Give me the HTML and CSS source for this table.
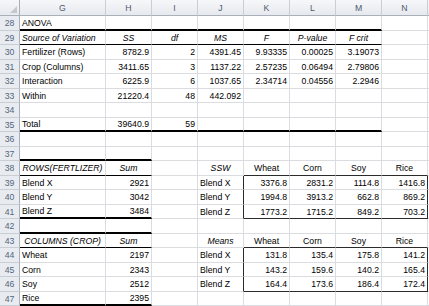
FILE: index.html
```html
<!DOCTYPE html>
<html>
<head>
<meta charset="utf-8">
<link rel="stylesheet" href="styles.css">
</head>
<body>
<div class="sheet">
  <div class="row head">
    <span class="corner"><i class="tri"></i></span><span>G</span><span>H</span><span>I</span><span>J</span><span>K</span><span>L</span><span>M</span><span>N</span><span></span>
  </div>
  <div class="row">
    <span class="rh">28</span><span class="l t2">ANOVA</span><span class="t2"></span><span class="t2"></span><span class="t2"></span><span class="t2"></span><span class="t2"></span><span class="t2"></span><span></span><span></span>
  </div>
  <div class="row">
    <span class="rh">29</span><span class="i l t1">Source of Variation</span><span class="i c t1">SS</span><span class="i c t1">df</span><span class="i c t1">MS</span><span class="i c t1">F</span><span class="i c t1">P-value</span><span class="i c t1">F crit</span><span></span><span></span>
  </div>
  <div class="row">
    <span class="rh">30</span><span class="l">Fertilizer (Rows)</span><span>8782.9</span><span>2</span><span>4391.45</span><span>9.93335</span><span>0.00025</span><span>3.19073</span><span></span><span></span>
  </div>
  <div class="row">
    <span class="rh">31</span><span class="l">Crop (Columns)</span><span>3411.65</span><span>3</span><span>1137.22</span><span>2.57235</span><span>0.06494</span><span>2.79806</span><span></span><span></span>
  </div>
  <div class="row">
    <span class="rh">32</span><span class="l">Interaction</span><span>6225.9</span><span>6</span><span>1037.65</span><span>2.34714</span><span>0.04556</span><span>2.2946</span><span></span><span></span>
  </div>
  <div class="row">
    <span class="rh">33</span><span class="l">Within</span><span>21220.4</span><span>48</span><span>442.092</span><span></span><span></span><span></span><span></span><span></span>
  </div>
  <div class="row">
    <span class="rh">34</span><span></span><span></span><span></span><span></span><span></span><span></span><span></span><span></span><span></span>
  </div>
  <div class="row">
    <span class="rh">35</span><span class="l t2">Total</span><span class="t2">39640.9</span><span class="t2">59</span><span class="t2"></span><span class="t2"></span><span class="t2"></span><span class="t2"></span><span></span><span></span>
  </div>
  <div class="row">
    <span class="rh">36</span><span></span><span></span><span></span><span></span><span></span><span></span><span></span><span></span><span></span>
  </div>
  <div class="row">
    <span class="rh">37</span><span class="t2"></span><span class="t2"></span><span></span><span></span><span></span><span></span><span></span><span></span><span></span>
  </div>
  <div class="row">
    <span class="rh">38</span><span class="i c t1">ROWS(FERTLIZER)</span><span class="i c t1">Sum</span><span></span><span class="i c">SSW</span><span class="c bx">Wheat</span><span class="c bx">Corn</span><span class="c bx">Soy</span><span class="c bx">Rice</span><span></span>
  </div>
  <div class="row">
    <span class="rh">39</span><span class="l">Blend X</span><span>2921</span><span></span><span class="l br">Blend X</span><span>3376.8</span><span>2831.2</span><span>1114.8</span><span class="br">1416.8</span><span></span>
  </div>
  <div class="row">
    <span class="rh">40</span><span class="l">Blend Y</span><span>3042</span><span></span><span class="l br">Blend Y</span><span>1994.8</span><span>3913.2</span><span>662.8</span><span class="br">869.2</span><span></span>
  </div>
  <div class="row">
    <span class="rh">41</span><span class="l t2">Blend Z</span><span class="t2">3484</span><span></span><span class="l br">Blend Z</span><span class="bx">1773.2</span><span class="bx">1715.2</span><span class="bx">849.2</span><span class="bx br">703.2</span><span></span>
  </div>
  <div class="row">
    <span class="rh">42</span><span class="t2"></span><span class="t2"></span><span></span><span></span><span></span><span></span><span></span><span></span><span></span>
  </div>
  <div class="row">
    <span class="rh">43</span><span class="i c t1">COLUMNS (CROP)</span><span class="i c t1">Sum</span><span></span><span class="i c">Means</span><span class="c bx">Wheat</span><span class="c bx">Corn</span><span class="c bx">Soy</span><span class="c bx">Rice</span><span></span>
  </div>
  <div class="row">
    <span class="rh">44</span><span class="l">Wheat</span><span>2197</span><span></span><span class="l br">Blend X</span><span>131.8</span><span>135.4</span><span>175.8</span><span class="br">141.2</span><span></span>
  </div>
  <div class="row">
    <span class="rh">45</span><span class="l">Corn</span><span>2343</span><span></span><span class="l br">Blend Y</span><span>143.2</span><span>159.6</span><span>140.2</span><span class="br">165.4</span><span></span>
  </div>
  <div class="row">
    <span class="rh">46</span><span class="l">Soy</span><span>2512</span><span></span><span class="l br">Blend Z</span><span class="bx">164.4</span><span class="bx">173.6</span><span class="bx">186.4</span><span class="bx br">172.4</span><span></span>
  </div>
  <div class="row">
    <span class="rh">47</span><span class="l t2">Rice</span><span class="t2">2395</span><span></span><span></span><span></span><span></span><span></span><span></span><span></span>
  </div>
</div>
</body>
</html>
```

FILE: styles.css
```css
html, body {
  margin: 0;
  padding: 0;
  background: #ffffff;
  overflow: hidden;
}

.sheet {
  display: grid;
  grid-template-columns: 20px 86px repeat(7, 46px) 1fr;
  grid-template-rows: 16px repeat(20, 14.5px);
  width: 429px;
  height: 306px;
  font-family: "Liberation Sans", Arial, sans-serif;
  font-size: 8.7px;
  color: #000000;
}

.row {
  display: contents;
}

.row > span {
  box-sizing: border-box;
  display: flex;
  align-items: center;
  justify-content: flex-end;
  padding: 1px 2px 0 2px;
  white-space: nowrap;
  overflow: hidden;
  border-right: 1px solid #dadcdf;
  border-bottom: 1px solid #dadcdf;
  line-height: 10px;
}

.head > span {
  justify-content: center;
  padding: 0;
  background: linear-gradient(#f6f7f9, #e6e9ee);
  border-right-color: #c9ced5;
  border-bottom-color: #a9b0ba;
  color: #4d5a6c;
}

.row > .rh {
  justify-content: center;
  padding: 1px 0 0 0;
  background: #e8ecf1;
  border-right-color: #a9b0ba;
  border-bottom-color: #c9ced5;
  color: #56657a;
}

.head > .corner {
  position: relative;
  border-right-color: #a9b0ba;
}

.tri {
  position: absolute;
  right: 2px;
  bottom: 2px;
  width: 0;
  height: 0;
  border-left: 7px solid transparent;
  border-bottom: 7px solid #c4c9d0;
}

.row > .l { justify-content: flex-start; }
.row > .c { justify-content: center; }
.row > .i { font-style: italic; }

.row > .t1 { border-bottom: 1px solid #000000; }
.row > .t2 { border-bottom: 2px solid #000000; }
.row > .bx { border-bottom: 1px solid #2b2b2b; }
.row > .br { border-right: 1px solid #2b2b2b; }
```
